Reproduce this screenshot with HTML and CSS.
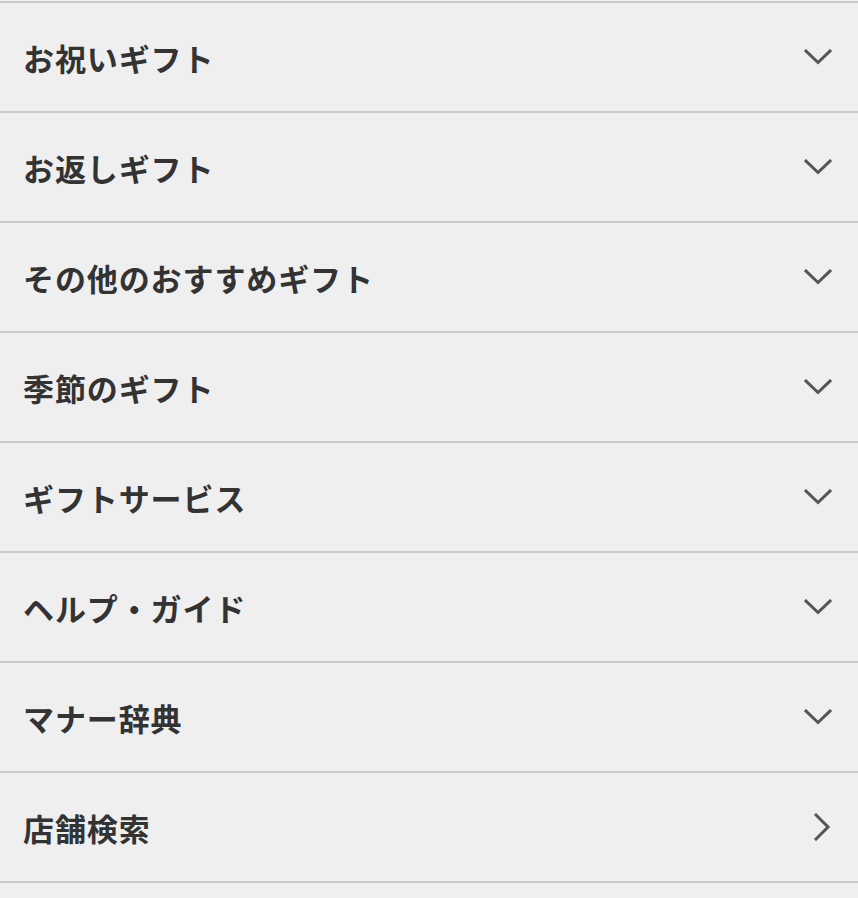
FILE: index.html
```html
<!DOCTYPE html>
<html lang="ja">
<head>
<meta charset="utf-8">
<link rel="stylesheet" href="styles.css">
</head>
<body>
<ul class="menu">
  <li class="item"><span class="label">お祝いギフト</span><svg class="icon" width="28" height="16" viewBox="0 0 28 16"><polyline points="2,2 14,13.5 26,2"/></svg></li>
  <li class="item"><span class="label">お返しギフト</span><svg class="icon" width="28" height="16" viewBox="0 0 28 16"><polyline points="2,2 14,13.5 26,2"/></svg></li>
  <li class="item"><span class="label">その他のおすすめギフト</span><svg class="icon" width="28" height="16" viewBox="0 0 28 16"><polyline points="2,2 14,13.5 26,2"/></svg></li>
  <li class="item"><span class="label">季節のギフト</span><svg class="icon" width="28" height="16" viewBox="0 0 28 16"><polyline points="2,2 14,13.5 26,2"/></svg></li>
  <li class="item"><span class="label">ギフトサービス</span><svg class="icon" width="28" height="16" viewBox="0 0 28 16"><polyline points="2,2 14,13.5 26,2"/></svg></li>
  <li class="item"><span class="label">ヘルプ・ガイド</span><svg class="icon" width="28" height="16" viewBox="0 0 28 16"><polyline points="2,2 14,13.5 26,2"/></svg></li>
  <li class="item"><span class="label">マナー辞典</span><svg class="icon" width="28" height="16" viewBox="0 0 28 16"><polyline points="2,2 14,13.5 26,2"/></svg></li>
  <li class="item"><span class="label">店舗検索</span><svg class="icon icon-right" width="18" height="28" viewBox="0 0 18 28"><polyline points="2,2 14,14 2,26"/></svg></li>
</ul>
</body>
</html>
```

FILE: styles.css
```css
html, body {
  margin: 0;
  padding: 0;
  background: #efefef;
}
body {
  font-family: "Noto Sans CJK JP", "Noto Sans", sans-serif;
  color: #333;
}
.menu {
  list-style: none;
  margin: 0;
  padding: 1px 0 0;
}
.item {
  display: flex;
  align-items: center;
  justify-content: space-between;
  height: 108px;
  border-bottom: 2px solid #c9c9c9;
  padding: 0 26px 0 23px;
}
.item:first-child {
  border-top: 2px solid #c9c9c9;
}
.label {
  font-size: 31px;
  font-weight: 700;
  letter-spacing: 0.9px;
  padding-top: 0;
}
.icon {
  fill: none;
  stroke: #555;
  stroke-width: 3;
  stroke-linecap: square;
  stroke-linejoin: miter;
}
.icon-right {
  margin-right: 0;
}
```
